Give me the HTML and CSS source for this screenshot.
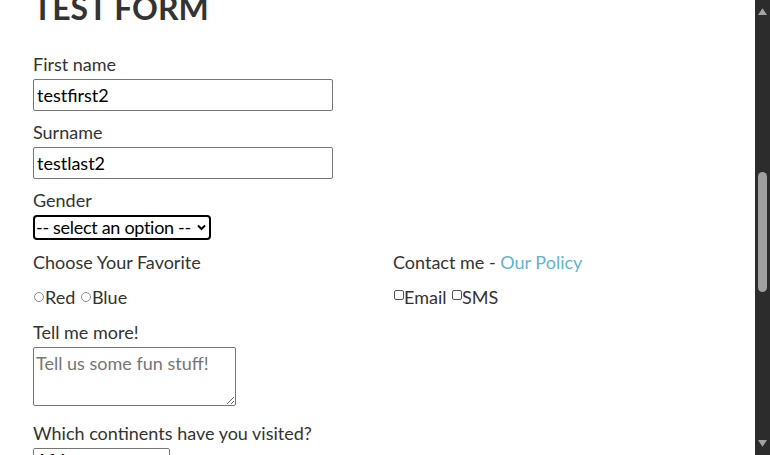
FILE: index.html
```html
<!DOCTYPE html>
<html lang="en">
<head>
<meta charset="utf-8">
<title>Test Form</title>
<link rel="stylesheet" href="styles.css">
</head>
<body>
<div class="page">
  <form class="form">
    <h1 class="title">TEST FORM</h1>
    <div class="field">
      <label class="label" for="first">First name</label>
      <input class="text" id="first" type="text" value="testfirst2">
    </div>
    <div class="field">
      <label class="label" for="last">Surname</label>
      <input class="text" id="last" type="text" value="testlast2">
    </div>
    <div class="field">
      <label class="label" for="gender">Gender</label>
      <div class="select-wrap">
        <select class="dropdown" id="gender">
          <option>-- select an option --</option>
          <option>Male</option>
          <option>Female</option>
        </select>
        <svg class="chevron" width="9" height="7" viewBox="0 0 9 7" aria-hidden="true"><path d="M1 1.5 L4.5 5 L8 1.5" fill="none" stroke="#000" stroke-width="2"/></svg>
      </div>
    </div>
    <div class="row">
      <div class="col">
        <p class="group-title">Choose Your Favorite</p>
        <div class="options"><input class="radio" type="radio" name="fav">Red <input class="radio" type="radio" name="fav">Blue</div>
      </div>
      <div class="col">
        <p class="group-title">Contact me - <a class="link" href="#">Our Policy</a></p>
        <div class="options"><input class="check" type="checkbox">Email <input class="check" type="checkbox">SMS</div>
      </div>
    </div>
    <div class="field field-area">
      <label class="label" for="more">Tell me more!</label>
      <textarea class="area" id="more" placeholder="Tell us some fun stuff!"></textarea>
    </div>
    <div class="field">
      <label class="label" for="cont">Which continents have you visited?</label>
      <select class="multi" id="cont" multiple>
        <option>Africa</option>
        <option>Antarctica</option>
        <option>Asia</option>
        <option>Australia</option>
        <option>Europe</option>
        <option>North America</option>
        <option>South America</option>
      </select>
    </div>
    <button class="submit" type="button">Submit</button>
  </form>
</div>
<div class="scrollbar" aria-hidden="true">
  <svg class="sb-arrow" width="15" height="17" viewBox="0 0 15 17"><path d="M3 15 L7.5 8.3 L12 15 Z" fill="#a3a3a3"/></svg>
  <div class="sb-track"><div class="sb-thumb"></div></div>
  <svg class="sb-arrow" width="15" height="17" viewBox="0 0 15 17"><path d="M3 2 L12 2 L7.5 8.7 Z" fill="#a3a3a3"/></svg>
</div>
<script src="script.js"></script>
</body>
</html>
```

FILE: styles.css
```css
html {
  background: #fff;
  scrollbar-width: none;
}
html::-webkit-scrollbar {
  width: 0;
  height: 0;
}
body {
  margin: 0;
  font-family: Lato, "Open Sans", Arial, sans-serif;
  color: #333;
}
.page {
  box-sizing: border-box;
  min-height: 1596px;
  padding: 576px 17px 40px 33px;
}
.title {
  margin: 0 0 25px;
  font-size: 32px;
  line-height: 40px;
  font-weight: 700;
  color: #333;
}
.field {
  margin-bottom: 10px;
}
.field-area {
  margin-bottom: 16px;
}
.label {
  display: block;
  font-size: 18px;
  line-height: 22px;
  margin-bottom: 4px;
}
.text {
  display: block;
  box-sizing: border-box;
  width: 300px;
  height: 32px;
  margin: 0;
  padding: 1px 3px;
  border: 1px solid #767676;
  border-radius: 2px;
  font-family: Lato, sans-serif;
  font-size: 18px;
  color: #000;
}
.select-wrap {
  position: relative;
  display: inline-block;
  vertical-align: top;
}
.dropdown {
  display: block;
  box-sizing: border-box;
  appearance: none;
  width: 178px;
  height: 25px;
  margin: 0;
  padding: 0 12px 0 1px;
  border: 2px solid #000;
  border-radius: 4px;
  background: #fff;
  font-family: Lato, sans-serif;
  font-size: 18px;
  letter-spacing: -0.3px;
  line-height: 21px;
  color: #000;
}
.chevron {
  position: absolute;
  right: 5px;
  top: 9px;
  pointer-events: none;
}
.row {
  display: grid;
  grid-template-columns: 360px 1fr;
  padding-top: 1px;
  margin-bottom: 13px;
}
.group-title {
  margin: 0 0 13px;
  font-size: 18px;
  line-height: 22px;
}
.link {
  color: #62b4d1;
  text-decoration: none;
}
.options {
  font-size: 18px;
  line-height: 22px;
}
.radio {
  appearance: none;
  box-sizing: border-box;
  width: 10px;
  height: 10px;
  margin: 0 1px 0 1px;
  border: 1px solid #8c8c8c;
  border-radius: 50%;
  background: #fff;
  vertical-align: 2px;
}
.check {
  appearance: none;
  box-sizing: border-box;
  width: 10px;
  height: 10px;
  margin: 0 0 0 1px;
  border: 1px solid #555;
  border-radius: 2px;
  background: #fff;
  vertical-align: 4px;
}
.area {
  display: block;
  box-sizing: border-box;
  width: 203px;
  height: 59px;
  margin: 0;
  padding: 4px 2px 2px;
  border: 1px solid #767676;
  border-radius: 2px;
  font-family: Lato, sans-serif;
  font-size: 18px;
  color: #000;
}
.area::placeholder {
  color: #757575;
}
.multi {
  display: block;
  box-sizing: border-box;
  width: 137px;
  height: 100px;
  margin: 0;
  border: 1px solid #767676;
  border-radius: 2px;
  font-family: Lato, sans-serif;
  font-size: 18px;
  color: #000;
}
.submit {
  margin-top: 10px;
  font-family: Lato, sans-serif;
  font-size: 18px;
}
.scrollbar {
  position: fixed;
  top: 0;
  right: 0;
  bottom: 0;
  width: 15px;
  display: flex;
  flex-direction: column;
  background: #2c2c2c;
}
.sb-arrow {
  display: block;
  flex: none;
}
.sb-track {
  flex: 1;
  padding: 155px 3px 0 3px;
}
.sb-thumb {
  width: 9px;
  height: 120px;
  border-radius: 4.5px;
  background: #9f9f9f;
}
```

FILE: script.js
```js
window.scrollTo(0, 588);
window.addEventListener('load', function () { window.scrollTo(0, 588); });
```
